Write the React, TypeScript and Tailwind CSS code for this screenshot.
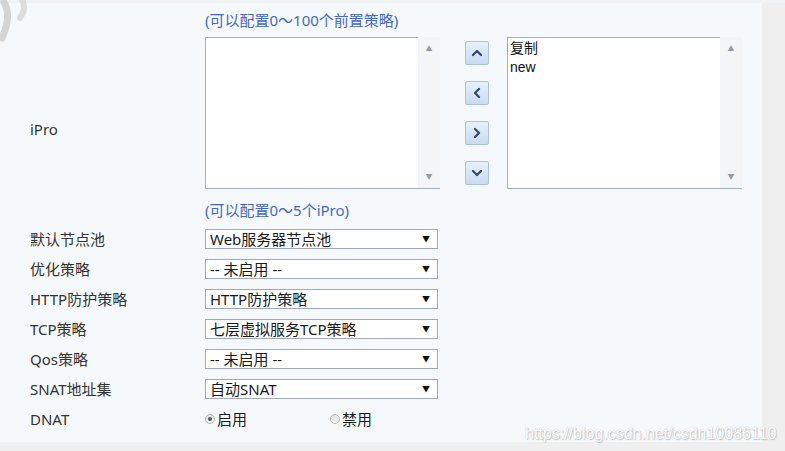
import React from 'react'

const font = { fontFamily: '"Microsoft YaHei", "Noto Sans", "Noto Sans CJK SC", sans-serif' }

function Chevron({ dir }: { dir: 'up' | 'down' | 'left' | 'right' }) {
  const d = {
    up: 'M3 9 L7 5 L11 9',
    down: 'M3 5 L7 9 L11 5',
    left: 'M9 3 L5 7 L9 11',
    right: 'M5 3 L9 7 L5 11',
  }[dir]
  return (
    <button
      type="button"
      className="w-6 h-6 flex items-center justify-center border border-[#a9c3dd] rounded-[2px] bg-gradient-to-b from-[#e6f0fa] to-[#c8dcf0]"
    >
      <svg width="14" height="14" viewBox="0 0 14 14">
        <path d={d} fill="none" stroke="#34506c" strokeWidth="2.4" strokeLinecap="round" strokeLinejoin="round" />
      </svg>
    </button>
  )
}

function ListBox({ items }: { items: string[] }) {
  return (
    <div className="w-[235px] h-[152px] flex bg-white">
      <div className="flex-1 border-l border-t border-b border-[#a4afc6] pt-[1px] pl-[2px]" style={{ fontFamily: '"Liberation Sans", "Noto Sans CJK SC", sans-serif' }}>
        {items.map(t => (
          <div key={t} className="text-[14px] leading-[19px] text-[#111]">{t}</div>
        ))}
      </div>
      <div className="w-[22px] flex flex-col justify-between items-center bg-[#f4f5f7] border-b border-[#a4afc6] py-[8px]">
        <span className="text-[7px] text-[#9a9a9a] leading-none">▲</span>
        <span className="text-[7px] text-[#9a9a9a] leading-none">▼</span>
      </div>
    </div>
  )
}

function Select({ value }: { value: string }) {
  return (
    <div className="w-[233px] h-[20px] border border-[#9ea9bf] bg-white flex items-center justify-between pl-[4px] pr-[7px]">
      <span className="text-[15px] leading-none text-[#1a1a1a] whitespace-nowrap">{value}</span>
      <span className="text-[8px] text-[#111] leading-none">▼</span>
    </div>
  )
}

function Radio({ checked, label }: { checked: boolean; label: string }) {
  return (
    <label className="flex items-center">
      <span className="w-[10px] h-[10px] rounded-full border border-[#b4b4b4] bg-gradient-to-b from-[#e0e0e0] to-[#f6f6f6] flex items-center justify-center">
        {checked && <span className="w-[4px] h-[4px] rounded-full bg-[#555]" />}
      </span>
      <span className="ml-[2px] text-[15px] text-[#1a1a1a]">{label}</span>
    </label>
  )
}

const rows: [string, string][] = [
  ['默认节点池', 'Web服务器节点池'],
  ['优化策略', '-- 未启用 --'],
  ['HTTP防护策略', 'HTTP防护策略'],
  ['TCP策略', '七层虚拟服务TCP策略'],
  ['Qos策略', '-- 未启用 --'],
  ['SNAT地址集', '自动SNAT'],
]

export default function App() {
  return (
    <div className="w-[785px] h-[451px] bg-[#efefef] flex flex-col overflow-hidden relative" style={font}>
      <div className="h-[3px] bg-[#f1f2f4]" />
      <div className="w-[762px] h-[439px] bg-[#f5f9fc] flex flex-col">
        {/* hint */}
        <div className="h-[34px] flex items-center pl-[205px]">
          <span className="text-[15px] text-[#4468c8] whitespace-nowrap">(可以配置0～100个前置策略)</span>
        </div>

        {/* iPro */}
        <div className="h-[185px] flex items-center">
          <div className="w-[205px] pl-[30px] text-[15px] text-[#333]">iPro</div>
          <div className="flex flex-col self-start">
            <div className="flex">
              <ListBox items={[]} />
              <div className="w-[67px] flex flex-col items-start gap-[16px] pt-[4px] pl-[25px]">
                <Chevron dir="up" />
                <Chevron dir="left" />
                <Chevron dir="right" />
                <Chevron dir="down" />
              </div>
              <ListBox items={['复制', 'new']} />
            </div>
            <div className="h-[33px] flex items-center pt-[10px]">
              <span className="text-[15px] text-[#4468c8] whitespace-nowrap">(可以配置0～5个iPro)</span>
            </div>
          </div>
        </div>

        <div className="pt-[2px]">
          {rows.map(([label, value]) => (
            <div key={label} className="h-[30px] flex items-center">
              <div className="w-[205px] pl-[30px] text-[15px] text-[#333] whitespace-nowrap">{label}</div>
              <Select value={value} />
            </div>
          ))}
          <div className="h-[30px] flex items-center">
            <div className="w-[205px] pl-[30px] text-[15px] text-[#333]">DNAT</div>
            <div className="flex items-center">
              <div className="w-[125px]"><Radio checked label="启用" /></div>
              <Radio checked={false} label="禁用" />
            </div>
          </div>
        </div>
      </div>

      {/* watermark */}
      <svg className="absolute left-0 top-0" width="40" height="42" viewBox="0 0 40 42">
        <path d="M4 2 Q12 16 2 38" fill="none" stroke="#d4d4d4" strokeWidth="7" strokeLinecap="round" />
        <path d="M22 0 Q27 8 20 18" fill="none" stroke="#dcdcdc" strokeWidth="6" strokeLinecap="round" />
      </svg>
      <div
        className="absolute left-[525px] top-[422px] text-[16px] text-white whitespace-nowrap"
        style={{ fontFamily: '"Liberation Sans", sans-serif', textShadow: '0 0 1px #aaa, 1px 1px 1px #ccc' }}
      >
        https://blog.csdn.net/csdn10086110
      </div>
    </div>
  )
}
